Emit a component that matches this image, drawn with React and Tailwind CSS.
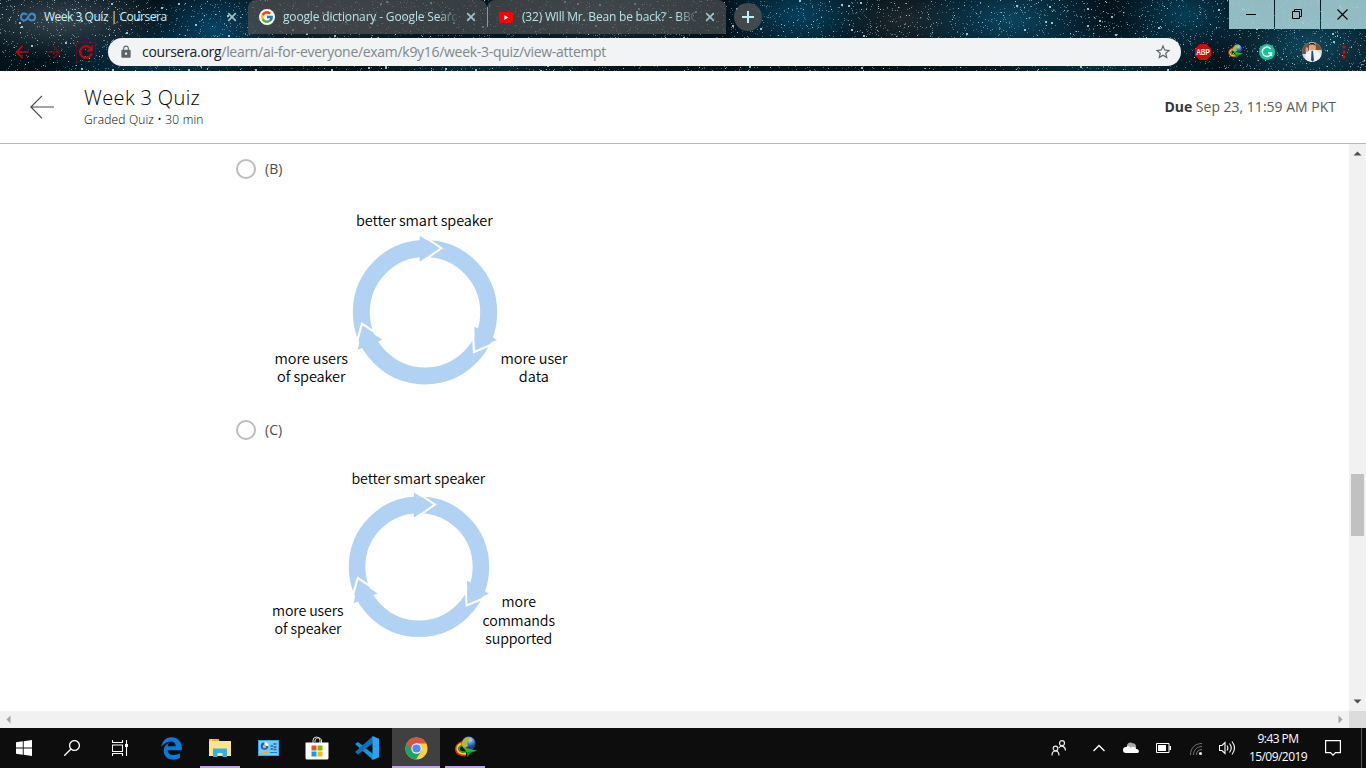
import React from "react";
import { MdArrowBack, MdArrowForward, MdRefresh, MdLock, MdStarBorder } from "react-icons/md";
import { FcGoogle } from "react-icons/fc";
import { FaEdgeLegacy } from "react-icons/fa";

const UI = "font-['Open_Sans','Noto_Sans',sans-serif]";

function makeStars(count) {
  let a = 90217;
  const rand = () => {
    a = (a + 0x6d2b79f5) | 0;
    let t = Math.imul(a ^ (a >>> 15), 1 | a);
    t = (t + Math.imul(t ^ (t >>> 7), 61 | t)) ^ t;
    return ((t ^ (t >>> 14)) >>> 0) / 4294967296;
  };
  return Array.from({ length: count }, () => {
    const bright = rand();
    return {
      x: Math.floor(rand() * 1366),
      y: Math.floor(rand() * 71),
      s: bright > 0.98 ? 2 : 1,
      o: bright > 0.9 ? 0.85 : 0.12 + bright * 0.5,
    };
  });
}
const stars = makeStars(6400);

const clouds = [
  [60, 20, 110, 40, "#414d57", 0.85],
  [215, 30, 70, 50, "#075a88", 0.7],
  [150, 60, 100, 35, "#074460", 0.7],
  [330, 20, 120, 40, "#2b3338", 0.6],
  [480, 60, 120, 30, "#0b3a4c", 0.7],
  [600, 15, 110, 40, "#2a3a42", 0.7],
  [800, 15, 80, 45, "#075578", 0.7],
  [905, 20, 70, 35, "#252c31", 0.8],
  [1010, 20, 100, 50, "#0e5270", 0.8],
  [1100, 60, 120, 35, "#063a4e", 0.8],
  [1185, 15, 70, 45, "#07506e", 0.7],
  [1310, 45, 100, 50, "#104c62", 0.9],
];

function Starfield() {
  return (
    <svg className="absolute inset-0 h-[71px] w-[1366px]" viewBox="0 0 1366 71" shapeRendering="crispEdges">
      <defs>
        {clouds.map((c, i) => (
          <radialGradient key={i} id={"cloud" + i}>
            <stop offset="0" stopColor={c[4]} stopOpacity={c[5]} />
            <stop offset="1" stopColor={c[4]} stopOpacity="0" />
          </radialGradient>
        ))}
      </defs>
      <rect width="1366" height="71" fill="#02121b" />
      {clouds.map((c, i) => (
        <ellipse key={i} cx={c[0]} cy={c[1]} rx={c[2]} ry={c[3]} fill={"url(#cloud" + i + ")"} />
      ))}
      {stars.map((s, i) => (
        <rect key={i} x={s.x} y={s.y} width={s.s} height={s.s} fill="#b5dfe8" opacity={s.o} />
      ))}
    </svg>
  );
}

function TabClose({ color = "#9fc3ca" }) {
  return (
    <svg className="size-[10px] shrink-0" viewBox="0 0 10 10" stroke={color} strokeWidth="1.7">
      <path d="M1.2 1.2 8.8 8.8M8.8 1.2 1.2 8.8" />
    </svg>
  );
}

function CourseraMark() {
  return (
    <svg className="h-4 w-4 shrink-0" viewBox="0 0 16 16" fill="none" strokeWidth="2.2" stroke="#3b87c8">
      <path d="M7 5.800C6.200 4.900 5.400 4.600 4.300 4.600a3.400 3.400 0 0 0 0 6.900c3.700 0 4-6.900 7.500-6.900a3.400 3.400 0 0 1 0 6.900c-1.500 0-2.500-.8-3.200-2" />
    </svg>
  );
}

function GlobeIcon({ className }) {
  return (
    <svg className={className} viewBox="0 0 24 24" fill="none">
      <defs>
        <radialGradient id="globe" cx=".6" cy=".25">
          <stop offset="0" stopColor="#c9e3fb" />
          <stop offset=".5" stopColor="#4d8fd9" />
          <stop offset="1" stopColor="#17458f" />
        </radialGradient>
      </defs>
      <path d="M10 5.500C-.500 9 .500 19.500 13 19.300" stroke="#e3271b" strokeWidth="2" />
      <path d="M10 7.300C1.500 10 2.500 18 13 17.800" stroke="#f6d51f" strokeWidth="2" />
      <path d="M10 9C3.800 11 4.800 16.500 13 16.200" stroke="#31ad3c" strokeWidth="1.600" />
      <circle cx="15.500" cy="7.500" r="7" fill="url(#globe)" />
      <path d="M8.800 7c.8-4 4-6 7-5.800l1.200 3-3 1.800 1 4-3.500 2.500C9.500 11.500 8.600 9.500 8.800 7Z" fill="#b6b63c" />
      <path d="m10.500 11.500 13.500 3.300-6 1.900-4 4.500-.3-5Z" fill="#118c16" />
      <path d="m10.500 11.500 13.500 3.300-10.300 1.400Z" fill="#2bbd1c" />
    </svg>
  );
}

function Avatar() {
  return (
    <svg className="size-5" viewBox="0 0 20 20">
      <clipPath id="face"><circle cx="10" cy="10" r="10" /></clipPath>
      <g clipPath="url(#face)">
        <rect width="20" height="20" fill="#d9dbd7" />
        <rect width="7" height="12" fill="#6f5343" />
        <rect x="13.500" width="7" height="8" fill="#845329" />
        <path d="M3 20 4 10l4-2h5l5 3 2 9Z" fill="#eff2f6" />
        <rect x="7.200" y="1" width="6" height="7.500" rx="2.800" fill="#d7a584" />
        <path d="M6.700 4C6.500-.5 13.800-.5 13.500 4l-1.500-1.500H8Z" fill="#251b18" />
        <path d="m4 5 2 1v4H3.500Z" fill="#d8a688" />
        <path d="m9.500 9 1.500 0 1 9-1.500 2L9 18Z" fill="#204a90" />
      </g>
    </svg>
  );
}

function TabStrip() {
  return (
    <div className="flex h-[34px]">
      <div className="flex w-[248px] items-center pl-5 pr-[11px]">
        <CourseraMark />
        <span className="ml-2 whitespace-nowrap text-[12px] tracking-[-0.48px] text-[#c4f4fc]">Week 3 Quiz | Coursera</span>
        <span className="ml-auto"><TabClose /></span>
      </div>
      <div className="flex w-[239px] items-center rounded-t-lg bg-[#505354]/70 pl-[11px] pr-[11px]">
        <span className="flex size-4 shrink-0 items-center justify-center rounded-full bg-white"><FcGoogle size={14} /></span>
        <span className="ml-2 w-[174px] shrink-0 overflow-hidden whitespace-nowrap text-[12px] tracking-[-0.16px] text-[#b9e2e9] [mask-image:linear-gradient(to_right,black_155px,transparent_176px)]">google dictionary - Google Search</span>
        <span className="ml-auto"><TabClose /></span>
      </div>
      <div className="flex w-[239px] items-center rounded-t-lg bg-[#505354]/70 pr-[11px]">
        <span className="mr-[11px] h-5 w-px shrink-0 bg-[#819da3]" />
        <svg className="h-[11px] w-[14px] shrink-0" viewBox="0 0 14 11"><rect width="14" height="11" rx="2.500" fill="red" /><path d="M5.300 3v5l4-2.500Z" fill="#fff" /></svg>
        <span className="ml-[9px] w-[174px] shrink-0 overflow-hidden whitespace-nowrap text-[12px] tracking-[-0.2px] text-[#b9e2e9] [mask-image:linear-gradient(to_right,black_155px,transparent_176px)]">(32) Will Mr. Bean be back? - BBC</span>
        <span className="ml-auto"><TabClose /></span>
      </div>
      <div className="ml-2 mt-[3px] flex size-7 items-center justify-center rounded-full bg-[#4b5052]/85">
        <svg className="size-3" viewBox="0 0 12 12" stroke="#c4edf3" strokeWidth="2"><path d="M6 0v12M0 6h12" /></svg>
      </div>
      <div className="ml-auto flex h-[29px] gap-px">
        <div className="flex w-[45px] items-center justify-center bg-[#a2cdd4]/90 pr-[2px]">
          <svg className="size-[10px]" viewBox="0 0 10 10" stroke="#000"><path d="M0 4.500h10" /></svg>
        </div>
        <div className="flex w-[45px] items-center justify-center bg-[#a2cdd4]/90 pb-px pr-[2px]">
          <svg className="size-[10px]" viewBox="0 0 10 10" fill="none" stroke="#000"><path d="M.5 2.500h7v7h-7zM2.500 2.500v-2h7v7h-2" /></svg>
        </div>
        <div className="flex w-[45px] items-center justify-center bg-[#a2cdd4]/90 pb-px pr-[2px]">
          <svg className="size-[11px]" viewBox="0 0 11 11" stroke="#000" strokeWidth="1.100"><path d="m.5.5 10 10M10.500.5l-10 10" /></svg>
        </div>
      </div>
    </div>
  );
}

function Toolbar() {
  return (
    <div className="flex h-[37px] items-start pt-1">
      <div className="flex h-7 w-[108px] shrink-0 items-center pl-[12px]">
        <MdArrowBack size={20} color="#c00808" />
        <MdArrowForward className="ml-[12px]" size={20} color="#6a1016" />
        <MdRefresh className="ml-[12px]" size={20} color="#c00808" stroke="#c00808" strokeWidth="0.8" />
      </div>
      <div className="flex h-7 w-[1073px] shrink-0 items-center rounded-full bg-[#f1f3f4] pl-[11px] pr-[9px]">
        <MdLock size={14} color="#5f6368" />
        <span className="ml-[9px] pb-px text-[14px] tracking-[-0.3px] text-[#80868b]"><span className="text-[#202124]">coursera.org</span>/learn/ai-for-everyone/exam/k9y16/week-3-quiz/view-attempt</span>
        <MdStarBorder className="ml-auto" size={18} color="#5f6368" />
      </div>
      <div className="flex h-7 flex-1 items-center pl-[14px]">
        <svg className="size-4 shrink-0 overflow-visible" viewBox="0 0 16 16">
          <path d="M4.700 0h6.600L16 4.700v6.600L11.300 16H4.700L0 11.300V4.700Z" fill="#d00b0b" />
          <text x="1.200" y="10.900" textLength="13.600" lengthAdjust="spacingAndGlyphs" fontSize="8.500" fontWeight="700" fontFamily="Liberation Sans, sans-serif" fill="#fff">ABP</text>
        </svg>
        <GlobeIcon className="ml-4 size-4 shrink-0" />
        <svg className="ml-4 size-4 shrink-0" viewBox="0 0 16 16" fill="none">
          <circle cx="8" cy="8" r="8" fill="#15c39a" />
          <path d="M11.600 4.700A4.700 4.700 0 1 0 12.500 9H9M12.500 9v3" stroke="#fff" strokeWidth="1.400" />
        </svg>
        <span className="ml-[14px] h-4 w-px bg-[#65151b]" />
        <span className="ml-3"><Avatar /></span>
        <svg className="ml-[20px] h-[14px] w-[4px]" viewBox="0 0 4 14" fill="#d00808"><circle cx="2" cy="2" r="1.700" /><circle cx="2" cy="7" r="1.700" /><circle cx="2" cy="12" r="1.700" /></svg>
      </div>
    </div>
  );
}

function QuizHeader() {
  return (
    <header className="flex h-[73px] items-center border-b border-[#b9b9b9] bg-white pl-[30px] pr-[30px]">
      <svg className="size-6" viewBox="0 0 24 24" fill="none" stroke="#4a4a4a" strokeWidth="1.200"><path d="M12 .8.900 12 12 23.300M.900 12H24" /></svg>
      <div className="ml-[30px] flex flex-col pb-[2px]">
        <h1 className="text-[20px] font-light leading-[26px] tracking-[0.36px] text-[#000]">Week 3 Quiz</h1>
        <p className="text-[12px] font-light leading-[17px] tracking-[0.17px] text-[#000]">Graded Quiz • 30 min</p>
      </div>
      <p className="ml-auto pb-[2px] text-[14px] text-[#5a5a5a]"><b className="font-bold text-[#373737]">Due</b> Sep 23, 11:59 AM PKT</p>
    </header>
  );
}

function Cycle({ cx, cy, scale }) {
  return (
    <g transform={"translate(" + cx + " " + cy + ") scale(" + scale + ")"}>
      <circle r="63.700" fill="none" stroke="#b2d2f4" strokeWidth="17" />
      <g fill="none" stroke="#fff" strokeWidth="2.200">
        <path d="M-6-79 16.300-64-6-48.500" />
        <path d="M47.600 12 49 39.800 74 29.200" />
        <path d="M-70.500 38-63 11.500-39.500 27.300" />
      </g>
      <g fill="#b2d2f4">
        <path d="M-5.300-76.500 14.500-64-5.300-50.500Z" />
        <path d="M49.300 14.200 72 27.500 50.300 37.800Z" />
        <path d="M-62.300 14.500-67.300 37.500-42.700 27.500Z" />
      </g>
    </g>
  );
}

function Diagram({ className, top, cycle, size, labels }) {
  return (
    <svg className={className} viewBox={"236 " + top + " 360 220"}>
      <Cycle {...cycle} />
      <g fontFamily="'Noto Sans CJK JP', sans-serif" fontSize={size} fontWeight="350" fill="#000">
        {labels.map(([text, x, y, w], i) => (
          <text key={i} x={x} y={y} textLength={w} lengthAdjust="spacing">{text}</text>
        ))}
      </g>
    </svg>
  );
}

const labelsB = [
  ["better smart speaker", 356, 225.7, 136.7],
  ["more users", 274.5, 363.7, 73.5],
  ["of speaker", 277, 382.400, 68.5],
  ["more user", 500.5, 363.7, 67],
  ["data", 518.8, 382.400, 30],
];
const labelsC = [
  ["better smart speaker", 351.5, 483.600, 133.7],
  ["more users", 272, 616, 71.5],
  ["of speaker", 274.5, 634.400, 67],
  ["more", 501.5, 607.400, 34.5],
  ["commands", 482.5, 626.400, 72.5],
  ["supported", 485.300, 644.400, 67],
];

function Option({ name }) {
  return (
    <label className="flex h-5 items-center gap-[9px] text-[14px] text-[#4c4c4c]">
      <span className="size-5 rounded-full border-2 border-[#bdbdbd] bg-white" />
      <span className="pb-[2px]">{name}</span>
    </label>
  );
}

function Triangle({ d, color }) {
  return <svg className="size-[9px]" viewBox="0 0 9 9"><path d={d} fill={color} /></svg>;
}

function Content() {
  return (
    <div className="flex h-[567px] bg-white">
      <main className="flex flex-1 flex-col pl-[236px] pt-[15px]">
        <Option name="(B)" />
        <Diagram className="mt-[11px] h-[220px] w-[360px]" top={190} size="14.500" cycle={{ cx: 425, cy: 312.2, scale: 1 }} labels={labelsB} />
        <div className="mt-[10px]"><Option name="(C)" /></div>
        <Diagram className="mt-[10px] h-[220px] w-[360px]" top={450} size="14.200" cycle={{ cx: 419, cy: 566.8, scale: 0.972 }} labels={labelsC} />
      </main>
      <div className="flex w-[17px] flex-col items-center bg-[#f1f1f1] pb-[5px] pt-[5px]">
        <Triangle d="M.5 6.500h8l-4-4Z" color="#505050" />
        <div className="mt-[316px] h-[62px] w-[13px] bg-[#c1c1c1]" />
        <span className="mt-auto flex"><Triangle d="M.5 2.500h8l-4 4Z" color="#505050" /></span>
      </div>
    </div>
  );
}

function StoreIcon() {
  return (
    <svg className="h-6 w-6" viewBox="0 0 24 24" fill="none">
      <path d="M8 7V4.500a3.500 3.500 0 0 1 7 0V7M10 6V4a3.500 3.500 0 0 1 6.500 0V7" stroke="#ddd" strokeWidth="1" />
      <path d="M.5 6.500h23V22a1.500 1.500 0 0 1-1.500 1.500H2A1.500 1.500 0 0 1 .5 22Z" fill="#fff" />
      <path d="M6.500 9.500h5v5h-5z" fill="#f25022" /><path d="M12.500 9.500h5v5h-5z" fill="#7fba00" />
      <path d="M6.500 15.500h5v5h-5z" fill="#00a4ef" /><path d="M12.500 15.500h5v5h-5z" fill="#ffb900" />
    </svg>
  );
}

function ChromeIcon() {
  return (
    <svg className="size-[23px]" viewBox="0 0 24 24">
      <circle cx="12" cy="12" r="11.500" fill="#ffcd46" />
      <path d="M12 12 17 14.700 11.500 23.500A11.500 11.500 0 0 1 2 6.300Z" fill="#1da462" />
      <path d="M2 6.300A11.500 11.500 0 0 1 22.200 6.700H12L7 14.500Z" fill="#dd5144" />
      <circle cx="12" cy="12" r="5.400" fill="#f5f5f5" />
      <circle cx="12" cy="12" r="4.300" fill="#4c8bf5" />
    </svg>
  );
}

function TaskItem({ children, open, active }) {
  return (
    <div className={"flex h-10 w-12 flex-col items-center " + (active ? "bg-[#404040]" : "")}>
      <div className="flex h-[38px] flex-1 items-center pt-[2px]">{children}</div>
      <div className={"h-[2px] " + (active ? "w-12 bg-[#c49df5]" : open ? "w-10 bg-[#c49df5]" : "w-10")} />
    </div>
  );
}

function Taskbar() {
  return (
    <div className="flex h-10 bg-[#0d0d0d]">
      <TaskItem>
        <svg className="size-4" viewBox="0 0 16 16" fill="#fff"><path d="M0 2.300 6.800 1.300v6.300H0zM7.700 1.200 16 0v7.600H7.700zM0 8.500h6.800v6.300L0 13.800zM7.700 8.500H16V16l-8.300-1.200z" /></svg>
      </TaskItem>
      <TaskItem>
        <svg className="size-4" viewBox="0 0 16 16" fill="none" stroke="#fff" strokeWidth="1.300"><circle cx="10.500" cy="5.500" r="4.900" /><path d="M7 9 .3 15.700" /></svg>
      </TaskItem>
      <TaskItem>
        <svg className="size-4" viewBox="0 0 16 16" fill="none" stroke="#fff" strokeWidth="1.100"><path d="M.5 0v2.500h10V0M.5 5h10v6.500H.5zM.5 16v-2.500h10V16M14.500 0v4M14.500 7v9" /><path d="M13 4h3v3h-3z" fill="#fff" stroke="none" /></svg>
      </TaskItem>
      <TaskItem><FaEdgeLegacy className="ml-[6px]" size={23} color="#0a7ad9" /></TaskItem>
      <div className="ml-1"><TaskItem open>
        <svg className="h-[20px] w-[22px]" viewBox="0 0 22 20"><path d="M0 1h9l1 2h12v15H0z" fill="#ffe48f" /><path d="M0 1h9.500l1 2H0z" fill="#efb52e" /><path d="M1.500 1.500h1.500v1H1.500z" fill="#fff" /><path d="M4 19v-8.500h14V19h-4.500v-4h-5v4Z" fill="#37aee5" /></svg>
      </TaskItem></div>
      <div className="-ml-1 w-[53px] pl-1"><TaskItem>
        <svg className="h-[16px] w-[21px]" viewBox="0 0 21 16"><path d="M0 0h21v16H0z" fill="#3ba6e8" /><path d="M1 1h19v14H1z" fill="#72cdf9" /><circle cx="6.500" cy="6" r="3.800" fill="#1869b6" /><path d="M6.500 6V1.800A4.200 4.200 0 0 1 10.700 6Z" fill="#fff" /><path d="M5 5h3v3H5z" fill="#f4ad28" /><path d="M12.500 6h2.500M12.500 9h2.500M15.500 4h3M15.500 7h3M15.500 9.500h3" stroke="#1969ae" strokeWidth="1.500" /><path d="M3 12.500h7" stroke="#f6a724" strokeWidth="1.300" /><path d="M12 12.500h7" stroke="#207db9" /></svg>
      </TaskItem></div>
      <TaskItem><StoreIcon /></TaskItem>
      <TaskItem>
        <svg className="ml-[3px] size-6" viewBox="0 0 24 24"><path d="M0 8 3 6l15 12v6Z" fill="#1b91d8" /><path d="M0 16 18 0v7L3 18.500Z" fill="#0873ba" /><path d="M17.500 0 24 2.800v18.400L17.500 24Z" fill="#27a5f1" /></svg>
      </TaskItem>
      <div className="ml-[3px]"><TaskItem active><ChromeIcon /></TaskItem></div>
      <div className="ml-[1px]"><TaskItem open><GlobeIcon className="size-6" /></TaskItem></div>
      <div className="ml-auto flex items-center text-white">
        <svg className="mr-[26px] size-4" viewBox="0 0 16 16" fill="none" stroke="#eee" strokeWidth="1.200"><circle cx="11" cy="3.200" r="2.500" /><circle cx="4.500" cy="8.500" r="2.300" /><path d="M1 15.500c0-6 7-6 7 0M7.800 8c2-3 6.500-2 6.700 2.500" /></svg>
        <svg className="mr-[18px] h-[8px] w-3" viewBox="0 0 12 8" fill="none" stroke="#fff" strokeWidth="1.400"><path d="m.5 7 5.500-5.500L11.500 7" /></svg>
        <svg className="mr-[17px] h-[12px] w-4" viewBox="0 0 16 12"><path d="M4 6C3 1.500 7-.5 9.500 1.200 12 1 13.500 3 13 6Z" fill="#aaa" /><path d="M3 11a3 3 0 0 1 0-6c2-1.500 4-.5 5 .7 2-2 5-.5 5.300 1.300 3.500.3 3.200 4 .7 4Z" fill="#fff" /></svg>
        <svg className="mr-[19px] h-[10px] w-[15px]" viewBox="0 0 15 10"><path d="M.5.500h12.500v9H.500z" fill="none" stroke="#fff" /><path d="M2 2h8v6H2zM13.500 3H15v4h-1.500z" fill="#fff" /></svg>
        <svg className="mr-[17px] mt-[2px] size-[12px]" viewBox="0 0 12 12" fill="none" stroke="#777" strokeWidth="1"><path d="M.5 12C.5 5 5 .5 12 .5M3.500 12c0-5 3.500-8.500 8.500-8.500M6.500 12c0-3.500 2-5.500 5.500-5.500" /><circle cx="10.500" cy="10.500" r="1.500" fill="#fff" stroke="none" /></svg>
        <svg className="mr-[12px] h-[14px] w-[17px]" viewBox="0 0 17 14" fill="none" stroke="#fff" strokeWidth="1.100"><path d="M.5 4.500h2.500L6 1.500v11L3 9.500H.500zM8 4.500q1.800 2.500 0 5M10.500 2.500q3.500 4.500 0 9M13 .5q5 6.500 0 13" /></svg>
        <div className="flex w-[60px] flex-col items-center whitespace-nowrap pb-px text-[12px] leading-[18px] tracking-[-0.55px]">
          <span>9:43 PM</span>
          <span>15/09/2019</span>
        </div>
        <svg className="ml-[17px] h-4 w-4" viewBox="0 0 16 16" fill="none" stroke="#fff" strokeWidth="1.200"><path d="M.6.600h14.800v12H10.500L8 15.200 5.500 12.600H.600Z" /></svg>
        <span className="ml-[20px] mr-1 h-10 w-px bg-[#555]" />
      </div>
    </div>
  );
}

export default function App() {
  return (
    <div className={"flex h-[768px] w-[1366px] flex-col overflow-hidden bg-white " + UI}>
      <div className="relative h-[71px] shrink-0">
        <Starfield />
        <div className="relative">
          <TabStrip />
          <Toolbar />
        </div>
      </div>
      <QuizHeader />
      <Content />
      <div className="flex h-[17px] shrink-0 bg-[#f1f1f1]">
        <div className="flex flex-1 items-center justify-between px-1">
          <Triangle d="M6.500.5v8l-4-4Z" color="#a3a3a3" />
          <Triangle d="M2.500.5v8l4-4Z" color="#a3a3a3" />
        </div>
        <div className="w-[17px] bg-[#dcdcdc]" />
      </div>
      <Taskbar />
    </div>
  );
}
